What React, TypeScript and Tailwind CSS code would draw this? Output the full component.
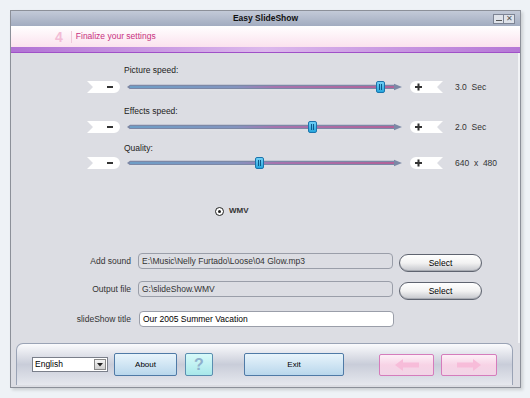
import type { ReactNode } from 'react'

const font = { fontFamily: '"Liberation Sans", Arial, sans-serif' }

function MinusTab() {
  return (
    <svg width="33" height="12" viewBox="0 0 33 12" className="shrink-0">
      <path d="M0 0 H27 A6 6 0 0 1 27 12 H0 L6 6 Z" fill="#ffffff" />
      <rect x="20" y="5" width="6" height="2" fill="#333" />
    </svg>
  )
}

function PlusTab() {
  return (
    <svg width="33" height="12" viewBox="0 0 33 12" className="shrink-0">
      <path d="M6 0 H33 L27 6 L33 12 H6 A6 6 0 0 1 6 0 Z" fill="#ffffff" />
      <rect x="5" y="5" width="7" height="2" fill="#333" />
      <rect x="7.5" y="2.5" width="2" height="7" fill="#333" />
    </svg>
  )
}

function Track({ thumb }: { thumb: number }) {
  return (
    <div className="relative w-[275px] h-[12px] shrink-0">
      <svg width="275" height="12" viewBox="0 0 275 12" className="absolute left-0 top-0">
        <defs>
          <linearGradient id="ln" x1="0" x2="1">
            <stop offset="0" stopColor="#5fb2e6" />
            <stop offset="0.4" stopColor="#8aa0d8" />
            <stop offset="0.55" stopColor="#d060b8" />
            <stop offset="1" stopColor="#e83c8c" />
          </linearGradient>
        </defs>
        <path d="M0 6 L3 3.8 H267 L267 2.8 L275 6 L267 9.2 L267 8.2 H3 Z" fill="#7c88a6" />
        <rect x="3" y="5.5" width="264" height="1" fill="url(#ln)" />
        <rect x="3" y="8.4" width="264" height="0.7" fill="#eef0f4" />
      </svg>
      <div
        className="absolute top-[0px] w-[9px] h-[12px] rounded-[2px] border border-[#1a74ad] bg-gradient-to-b from-[#6fd0f6] to-[#23a6dd] flex items-center justify-center gap-[1px]"
        style={{ left: thumb }}
      >
        <div className="w-[1px] h-[6px] bg-[#0c5a8a]" />
        <div className="w-[1px] h-[6px] bg-[#0c5a8a]" />
      </div>
    </div>
  )
}

function SliderRow({ thumb, value }: { thumb: number; value: string }) {
  return (
    <div className="flex items-center h-[12px] ml-[76px]">
      <MinusTab />
      <div className="ml-[7px]">
        <Track thumb={thumb} />
      </div>
      <div className="ml-[8px]">
        <PlusTab />
      </div>
      <span className="ml-[12px] text-[8.5px] text-[#333] whitespace-pre">{value}</span>
    </div>
  )
}

function Label({ children, mt }: { children: ReactNode; mt: string }) {
  return <div className={`h-[12px] leading-[12px] ml-[113px] text-[8.5px] text-[#222] ${mt}`}>{children}</div>
}

function SelectButton() {
  return (
    <button className="w-[83px] h-[18px] rounded-full border border-[#5f6470] bg-gradient-to-b from-[#ffffff] via-[#f2f2f2] to-[#c4c6cc] text-[8.5px] text-black shadow-[inset_0_-1px_0_#a8abb2]">
      Select
    </button>
  )
}

export default function App() {
  return (
    <div className="w-[530px] h-[398px] bg-[#eef2f6] pt-[10px] pl-[10px]" style={font}>
      <div className="w-[511px] h-[378px] border border-[#8c9099] bg-[#dcdde3] flex flex-col shadow-[2px_2px_3px_rgba(0,0,0,0.15)]">
        {/* Title bar */}
        <div className="h-[15px] shrink-0 relative flex items-center justify-center bg-gradient-to-b from-[#c3cad8] to-[#a2acc0]">
          <span className="text-[8.5px] font-bold text-[#111]">Easy SlideShow</span>
          <div className="absolute right-[5px] top-[3px] flex">
            <div className="w-[11px] h-[10px] border border-[#7d8494] bg-[#dfe3ea] flex items-end justify-center pb-[2px]">
              <div className="w-[6px] h-[1px] bg-[#555]" />
            </div>
            <div className="w-[11px] h-[10px] border border-[#7d8494] border-l-0 bg-[#dfe3ea] flex items-center justify-center text-[8px] leading-none text-[#555]">
              ✕
            </div>
          </div>
        </div>

        {/* Step header */}
        <div className="h-[21px] shrink-0 flex items-center bg-gradient-to-b from-[#ffffff] to-[#fbe2ee]">
          <span className="ml-[44px] text-[14px] font-bold text-[#f2bcd6] leading-none">4</span>
          <div className="ml-[8px] w-[1px] h-[12px] bg-[#f0c8da]" />
          <span className="ml-[4px] text-[8.5px] text-[#c8307e]">Finalize your settings</span>
        </div>
        <div className="h-[6px] shrink-0 bg-gradient-to-r from-[#b172d4] via-[#dcb8ec] to-[#b577d6] border-b border-[#a050c8]" />

        {/* Content */}
        <div className="flex-1 flex flex-col border-r-2 border-[#f2f3f6]">
          <Label mt="mt-[11px]">Picture speed:</Label>
          <div className="mt-[5px]">
            <SliderRow thumb={249} value="3.0  Sec" />
          </div>
          <Label mt="mt-[12px]">Effects speed:</Label>
          <div className="mt-[4px]">
            <SliderRow thumb={181} value="2.0  Sec" />
          </div>
          <Label mt="mt-[9px]">Quality:</Label>
          <div className="mt-[3px]">
            <SliderRow thumb={128} value="640  x  480" />
          </div>

          <div className="mt-[36px] h-[12px] ml-[204px] flex items-center gap-[5px]">
            <div className="w-[9px] h-[9px] rounded-full border-[1.5px] border-[#222] bg-white flex items-center justify-center">
              <div className="w-[3px] h-[3px] rounded-full bg-[#222]" />
            </div>
            <span className="text-[8px] font-bold text-[#333]">WMV</span>
          </div>

          <div className="mt-[35px] h-[18px] flex items-center">
            <span className="w-[120px] text-right text-[8.5px] text-[#333]">Add sound</span>
            <div className="ml-[7px] w-[255px] h-[16px] rounded-[4px] border border-[#9a9ea9] bg-[#dcdde3] flex items-center px-[3px] text-[8.5px] text-[#333] whitespace-nowrap overflow-hidden">
              E:\Music\Nelly Furtado\Loose\04 Glow.mp3
            </div>
            <div className="ml-[6px]">
              <SelectButton />
            </div>
          </div>

          <div className="mt-[10px] h-[18px] flex items-center">
            <span className="w-[120px] text-right text-[8.5px] text-[#333]">Output file</span>
            <div className="ml-[7px] w-[255px] h-[16px] rounded-[4px] border border-[#9a9ea9] bg-[#dcdde3] flex items-center px-[3px] text-[8.5px] text-[#333]">
              G:\slideShow.WMV
            </div>
            <div className="ml-[6px]">
              <SelectButton />
            </div>
          </div>

          <div className="mt-[13px] h-[16px] flex items-center">
            <span className="w-[120px] text-right text-[8.5px] text-[#333]">slideShow title</span>
            <div className="ml-[8px] w-[255px] h-[16px] rounded-[4px] border border-[#9a9ea9] bg-white flex items-center px-[3px] text-[8.5px] text-black">
              Our 2005 Summer Vacation
            </div>
          </div>
        </div>

        {/* Bottom panel */}
        <div className="ml-[5px] w-[497px] h-[42px] shrink-0 mb-[2px] rounded-t-[7px] border border-b-0 border-[#9aa3b5] bg-gradient-to-b from-[#fbfbfd] via-[#c9cdd9] to-[#e6e8ee] flex items-center">
          <div className="ml-[15px] w-[76px] h-[15px] bg-white border border-[#7a7f8a] flex items-center">
            <span className="flex-1 pl-[2px] text-[8.5px] text-black">English</span>
            <div className="w-[12px] h-[11px] mr-[1px] bg-gradient-to-b from-[#f4f4f4] to-[#cfcfcf] border border-[#888] flex items-center justify-center">
              <svg width="6" height="4" viewBox="0 0 6 4">
                <path d="M0 0 H6 L3 3.5 Z" fill="#222" />
              </svg>
            </div>
          </div>
          <button className="ml-[6px] w-[63px] h-[23px] rounded-[2px] border border-[#4f7aa6] bg-gradient-to-b from-[#e8f4fb] to-[#b9d7ec] text-[8px] text-black">
            About
          </button>
          <button className="ml-[8px] w-[28px] h-[23px] rounded-[2px] border border-[#5a8eb0] bg-gradient-to-b from-[#d8fafa] to-[#a8e8ea] text-[16px] font-bold text-[#8fb0cc] leading-none">
            ?
          </button>
          <button className="ml-[31px] w-[100px] h-[23px] rounded-[2px] border border-[#4f7aa6] bg-gradient-to-b from-[#e8f4fb] to-[#b9d7ec] text-[8px] text-black">
            Exit
          </button>
          <button className="ml-[35px] w-[55px] h-[22px] rounded-[2px] border border-[#d57cbc] bg-gradient-to-b from-[#fdf0f7] via-[#f7d3e6] to-[#f1d5e6] flex items-center justify-center">
            <svg width="24" height="12" viewBox="0 0 24 12">
              <path d="M0 6 L8 0 V3.5 H24 V8.5 H8 V12 Z" fill="#f7bcd9" />
            </svg>
          </button>
          <button className="ml-[7px] w-[56px] h-[22px] rounded-[2px] border border-[#d57cbc] bg-gradient-to-b from-[#fdf0f7] via-[#f7d3e6] to-[#f1d5e6] flex items-center justify-center">
            <svg width="24" height="12" viewBox="0 0 24 12">
              <path d="M24 6 L16 0 V3.5 H0 V8.5 H16 V12 Z" fill="#f7bcd9" />
            </svg>
          </button>
        </div>
      </div>
    </div>
  )
}
